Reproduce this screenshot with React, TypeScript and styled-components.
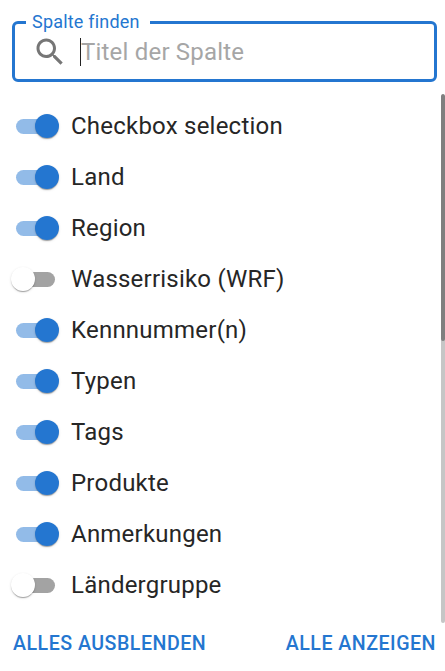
import React from "react";
import styled, { createGlobalStyle } from "styled-components";

const Global = createGlobalStyle`
  html, body { margin: 0; padding: 0; background: #fff; }
  body { font-family: Roboto, "Liberation Sans", sans-serif; overflow: hidden; }
`;

const Panel = styled.div`
  position: relative;
  width: 445px;
  height: 671px;
  overflow: hidden;
  box-sizing: border-box;
  padding: 12px 8px 0 12px;
`;

const SearchBox = styled.fieldset`
  box-sizing: border-box;
  width: 425px;
  height: 70px;
  margin: 0;
  padding: 0 0 7px 17px;
  border: 3px solid #2476d0;
  border-radius: 6px;
  display: flex;
  align-items: center;
  gap: 12px;
`;

const Legend = styled.legend`
  margin-left: -6px;
  padding: 0 10px 0 6px;
  font-size: 18px;
  line-height: 20px;
  letter-spacing: 0.2px;
  color: #2476d0;
`;

const SearchIcon = styled.svg`
  width: 36px;
  height: 36px;
  flex: none;
  fill: #767676;
`;

const Field = styled.div`
  display: flex;
  align-items: center;
  height: 28px;
`;

const Caret = styled.span`
  width: 1px;
  height: 28px;
  background: #222;
`;

const Input = styled.input`
  width: 320px;
  border: 0;
  outline: 0;
  padding: 0;
  background: transparent;
  font: 400 24px Roboto, sans-serif;
  letter-spacing: 0.2px;
  color: #222;
  &::placeholder { color: #a6a6a6; opacity: 1; }
`;

const List = styled.ul`
  list-style: none;
  margin: 19px 0 0 -12px;
  padding: 0;
`;

const Row = styled.li`
  display: flex;
  align-items: center;
  height: 51px;
`;

const Switch = styled.span<{ $on: boolean }>`
  position: relative;
  flex: none;
  width: 39px;
  height: 15px;
  margin: 0 16px;
  border-radius: 8px;
  background: ${(p) => (p.$on ? "#92bbe8" : "#a3a3a3")};
  &::after {
    content: "";
    position: absolute;
    top: -5px;
    left: ${(p) => (p.$on ? "19px" : "-5px")};
    width: 24px;
    height: 24px;
    border-radius: 50%;
    background: ${(p) => (p.$on ? "#2476d0" : "#fff")};
    box-shadow: 0 2px 1px -1px rgba(0,0,0,.2), 0 1px 1px 0 rgba(0,0,0,.14), 0 1px 3px 0 rgba(0,0,0,.12);
  }
`;

const Label = styled.span`
  margin-bottom: 2px;
  font-size: 24px;
  letter-spacing: 0.22px;
  line-height: 30px;
  color: #262626;
`;

const Footer = styled.div`
  display: flex;
  justify-content: space-between;
  margin: 18px 1px 0 1px;
`;

const Action = styled.button`
  border: 0;
  padding: 0;
  background: transparent;
  font: 500 19.6px Roboto, sans-serif;
  letter-spacing: 0.5px;
  line-height: 30px;
  color: #2476d0;
`;

const Track = styled.div`
  position: absolute;
  top: 94px;
  right: 0;
  width: 4px;
  height: 529px;
  border-radius: 2px;
  background: #c6c6c6;
  overflow: hidden;
`;

const Thumb = styled.div`
  width: 100%;
  height: 247px;
  background: #7f7f7f;
  border-radius: 2px;
`;

const columns: [string, boolean][] = [
  ["Checkbox selection", true],
  ["Land", true],
  ["Region", true],
  ["Wasserrisiko (WRF)", false],
  ["Kennnummer(n)", true],
  ["Typen", true],
  ["Tags", true],
  ["Produkte", true],
  ["Anmerkungen", true],
  ["Ländergruppe", false],
];

export default function App() {
  return (
    <Panel>
      <Global />
      <SearchBox>
        <Legend>Spalte finden</Legend>
        <SearchIcon viewBox="0 0 24 24">
          <path d="M15.5 14h-.79l-.28-.27C15.41 12.59 16 11.11 16 9.5 16 5.91 13.09 3 9.5 3S3 5.91 3 9.5 5.91 16 9.5 16c1.61 0 3.09-.59 4.23-1.57l.27.28v.79l5 4.99L20.49 19l-4.99-5zm-6 0C7.01 14 5 11.99 5 9.5S7.01 5 9.5 5 14 7.01 14 9.5 11.99 14 9.5 14z" />
        </SearchIcon>
        <Field>
          <Caret />
          <Input placeholder="Titel der Spalte" readOnly />
        </Field>
      </SearchBox>
      <List>
        {columns.map(([name, on]) => (
          <Row key={name}>
            <Switch $on={on} />
            <Label>{name}</Label>
          </Row>
        ))}
      </List>
      <Footer>
        <Action>ALLES AUSBLENDEN</Action>
        <Action>ALLE ANZEIGEN</Action>
      </Footer>
      <Track>
        <Thumb />
      </Track>
    </Panel>
  );
}
